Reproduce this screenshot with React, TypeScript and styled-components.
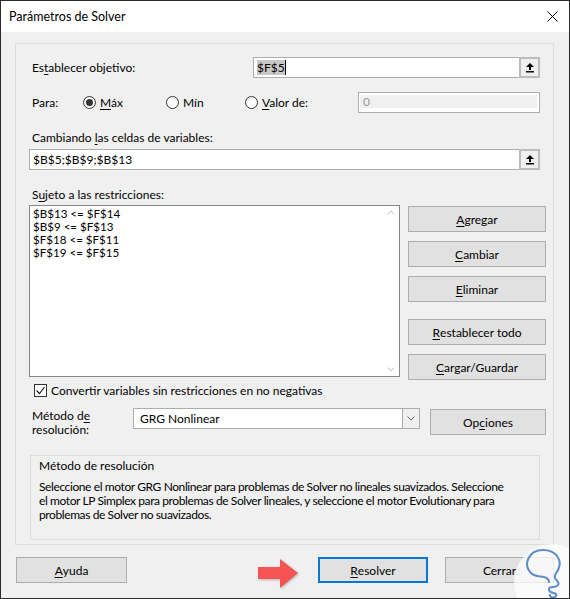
import * as React from 'react';
import styled, { createGlobalStyle } from 'styled-components';

const GlobalStyle = createGlobalStyle`
    html, body {
        margin: 0;
        padding: 0;
        background: #ffffff;
    }
    body {
        font-family: "Segoe UI", Lato, "Liberation Sans", sans-serif;
        font-size: 12px;
        color: #000000;
    }
`;

const Window = styled.div`
    position: relative;
    box-sizing: border-box;
    width: 570px;
    height: 599px;
    border: 1px solid #2b2b2b;
    background-color: #f0f0f0;
    display: flex;
    flex-direction: column;
    overflow: hidden;
`;

const TitleBar = styled.div`
    height: 31px;
    flex-shrink: 0;
    background-color: #ffffff;
    display: flex;
    align-items: center;
    justify-content: space-between;
    padding: 0 11px 0 8px;
`;

const Title = styled.span`
    font-size: 12.5px;
`;

const Body = styled.div`
    flex: 1;
    padding: 11px 15px 0 14px;
    display: flex;
    flex-direction: column;
`;

const Panel = styled.div`
    border: 1px solid #dcdcdc;
    padding: 13px 6px 4px 13px;
    display: flex;
    flex-direction: column;
`;

const ObjectiveRow = styled.div`
    display: grid;
    grid-template-columns: 224px 287px;
    align-items: center;
    height: 21px;
`;

const Label = styled.div<{ $top?: number }>`
    padding-left: 3px;
    line-height: 16px;
    margin-top: ${(p) => p.$top || 0}px;
`;

const TextField = styled.div<{ $top?: number; $width?: number }>`
    box-sizing: border-box;
    height: 21px;
    width: ${(p) => (p.$width ? `${p.$width}px` : 'auto')};
    margin-top: ${(p) => p.$top || 0}px;
    background-color: #ffffff;
    border: 1px solid #abadb3;
    display: flex;
    align-items: center;
    padding-left: 3px;
`;

const FieldText = styled.span`
    flex: 1;
    white-space: nowrap;
`;

const Selected = styled.span`
    background-color: #c8c8c8;
    border-right: 1px solid #000000;
`;

const RefButton = styled.div`
    box-sizing: border-box;
    width: 21px;
    height: 21px;
    margin: -1px -1px -1px 0;
    border: 2px solid #bcbcbc;
    background-color: #f0f0f0;
    display: flex;
    align-items: center;
    justify-content: center;
`;

const ParaRow = styled.div`
    display: grid;
    grid-template-columns: 54px 83px 79px 113px 182px;
    align-items: center;
    height: 21px;
    margin-top: 14px;
`;

const RadioItem = styled.div`
    display: flex;
    align-items: center;
    gap: 4px;
`;

const RadioCircle = styled.span<{ $checked?: boolean }>`
    box-sizing: border-box;
    width: 13px;
    height: 13px;
    border-radius: 50%;
    border: 1px solid #333333;
    background-color: #ffffff;
    display: flex;
    align-items: center;
    justify-content: center;

    &::after {
        content: '';
        display: ${(p) => (p.$checked ? 'block' : 'none')};
        width: 7px;
        height: 7px;
        border-radius: 50%;
        background-color: #333333;
    }
`;

const DisabledField = styled.div`
    box-sizing: border-box;
    height: 21px;
    border: 1px solid #abadb3;
    background-color: #ffffff;
    padding: 2px 2px 4px 1px;
    display: flex;
`;

const DisabledInner = styled.div`
    flex: 1;
    background-color: #f0f0f0;
    color: #9a9a9a;
    padding-left: 3px;
    line-height: 13px;
`;

const ConstraintArea = styled.div`
    display: grid;
    grid-template-columns: 371px 138px;
    column-gap: 8px;
    align-items: start;
    margin-top: 2px;
`;

const ListBox = styled.div`
    box-sizing: border-box;
    height: 172px;
    border: 1px solid #828790;
    background-color: #ffffff;
    display: flex;
`;

const ListItems = styled.div`
    flex: 1;
    padding: 1px 0 0 3px;
    font-size: 11.6px;
    line-height: 13px;
`;

const ScrollBar = styled.div`
    width: 17px;
    display: flex;
    flex-direction: column;
    justify-content: space-between;
    align-items: center;
    padding: 4px 0;
`;

const ButtonColumn = styled.div`
    display: flex;
    flex-direction: column;
`;

const Button = styled.div<{ $top?: number; $width?: number; $default?: boolean }>`
    box-sizing: border-box;
    flex-shrink: 0;
    height: 26px;
    width: ${(p) => (p.$width ? `${p.$width}px` : 'auto')};
    margin-top: ${(p) => p.$top || 0}px;
    background-color: #e1e1e1;
    border: ${(p) => (p.$default ? '2px solid #0078d7' : '1px solid #adadad')};
    display: flex;
    align-items: center;
    justify-content: center;
    white-space: nowrap;
`;

const CheckRow = styled.div`
    display: flex;
    align-items: center;
    gap: 4px;
    height: 16px;
    margin-top: 2px;
    padding-left: 5px;
`;

const CheckBox = styled.span`
    box-sizing: border-box;
    width: 13px;
    height: 13px;
    border: 1px solid #333333;
    background-color: #ffffff;
    display: flex;
    align-items: center;
    justify-content: center;
`;

const MethodRow = styled.div`
    display: flex;
    align-items: flex-start;
    margin-top: 10px;
`;

const MethodLabel = styled.div`
    width: 101px;
    padding: 1px 0 0 3px;
    line-height: 14px;
`;

const Select = styled.div`
    box-sizing: border-box;
    width: 287px;
    height: 21px;
    border: 1px solid #abadb3;
    background-color: #ffffff;
    display: flex;
    align-items: center;
    padding-left: 6px;
`;

const SelectArrow = styled.div`
    box-sizing: border-box;
    width: 18px;
    height: 21px;
    margin: -1px -1px -1px 0;
    border: 1px solid #abadb3;
    background-color: #f0f0f0;
    display: flex;
    align-items: center;
    justify-content: center;
`;

const OptionsButton = styled(Button)`
    width: 116px;
    margin-left: 10px;
    margin-top: 1px;
`;

const InfoBox = styled.div`
    box-sizing: border-box;
    width: 510px;
    height: 85px;
    margin: 18px 0 0 1px;
    border: 1px solid #dcdcdc;
    padding: 2px 4px 0 8px;
`;

const InfoTitle = styled.div`
    line-height: 15px;
`;

const InfoText = styled.p`
    margin: 7px 0 0;
    line-height: 14px;
    letter-spacing: -0.4px;
    white-space: nowrap;
`;

const Footer = styled.div`
    display: flex;
    justify-content: space-between;
    align-items: center;
    padding: 12px 0 0 1px;
`;

const FooterGroup = styled.div`
    display: flex;
    gap: 17px;
`;

const Arrow = styled.svg`
    position: absolute;
    left: 255px;
    top: 555px;
    filter: drop-shadow(1px 1px 1px rgba(0, 0, 0, 0.25));
`;

const LogoBadge = styled.div`
    position: absolute;
    left: 513px;
    top: 543px;
    width: 76px;
    height: 76px;
    border-radius: 50%;
    background-color: rgba(255, 255, 255, 0.72);
`;

const Mn = styled.span`
    text-decoration: underline;
    text-underline-offset: 2px;
`;

function RefIcon() {
    return (
        <svg width="10" height="11" viewBox="0 0 10 11">
            <path d="M5 1 L9 5 L6 5 L6 8 L4 8 L4 5 L1 5 Z" fill="#000" />
            <rect x="1" y="9" width="8" height="1.5" fill="#000" />
        </svg>
    );
}

function Chevron({ up }: { up?: boolean }) {
    return (
        <svg width="8" height="5" viewBox="0 0 8 5">
            <path
                d={up ? 'M0.5 4.5 L4 1 L7.5 4.5' : 'M0.5 0.5 L4 4 L7.5 0.5'}
                fill="none"
                stroke="#c2c2c2"
                strokeWidth="1"
            />
        </svg>
    );
}

const constraints = ['$B$13 <= $F$14', '$B$9 <= $F$13', '$F$18 <= $F$11', '$F$19 <= $F$15'];

export default function App() {
    return (
        <Window>
            <GlobalStyle />
            <TitleBar>
                <Title>Parámetros de Solver</Title>
                <svg width="11" height="11" viewBox="0 0 11 11">
                    <path d="M0.5 0.5 L10.5 10.5 M10.5 0.5 L0.5 10.5" stroke="#000" strokeWidth="1" />
                </svg>
            </TitleBar>
            <Body>
                <Panel>
                    <ObjectiveRow>
                        <Label>
                            Es<Mn>t</Mn>ablecer objetivo:
                        </Label>
                        <TextField>
                            <FieldText>
                                <Selected>$F$5</Selected>
                            </FieldText>
                            <RefButton>
                                <RefIcon />
                            </RefButton>
                        </TextField>
                    </ObjectiveRow>

                    <ParaRow>
                        <Label>Para:</Label>
                        <RadioItem>
                            <RadioCircle $checked />
                            <span>
                                <Mn>M</Mn>áx
                            </span>
                        </RadioItem>
                        <RadioItem>
                            <RadioCircle />
                            <span>Mín</span>
                        </RadioItem>
                        <RadioItem>
                            <RadioCircle />
                            <span>
                                <Mn>V</Mn>alor de:
                            </span>
                        </RadioItem>
                        <DisabledField>
                            <DisabledInner>0</DisabledInner>
                        </DisabledField>
                    </ParaRow>

                    <Label $top={17}>
                        Cambiando <Mn>l</Mn>as celdas de variables:
                    </Label>
                    <TextField $top={3} $width={511}>
                        <FieldText>$B$5;$B$9;$B$13</FieldText>
                        <RefButton>
                            <RefIcon />
                        </RefButton>
                    </TextField>

                    <Label $top={17}>
                        S<Mn>u</Mn>jeto a las restricciones:
                    </Label>
                    <ConstraintArea>
                        <ListBox>
                            <ListItems>
                                {constraints.map((c) => (
                                    <div key={c}>{c}</div>
                                ))}
                            </ListItems>
                            <ScrollBar>
                                <Chevron up />
                                <Chevron />
                            </ScrollBar>
                        </ListBox>
                        <ButtonColumn>
                            <Button $top={1}>
                                <Mn>A</Mn>gregar
                            </Button>
                            <Button $top={9}>
                                <Mn>C</Mn>ambiar
                            </Button>
                            <Button $top={9}>
                                <Mn>E</Mn>liminar
                            </Button>
                            <Button $top={17}>
                                <Mn>R</Mn>establecer todo
                            </Button>
                            <Button $top={9}>
                                <Mn>C</Mn>argar/Guardar
                            </Button>
                        </ButtonColumn>
                    </ConstraintArea>

                    <CheckRow>
                        <CheckBox>
                            <svg width="11" height="11" viewBox="0 0 11 11">
                                <path d="M1.5 5.5 L4.5 8.5 L9.5 2" fill="none" stroke="#222" strokeWidth="1.2" />
                            </svg>
                        </CheckBox>
                        <span>Convertir variables sin restricciones en no negativas</span>
                    </CheckRow>

                    <MethodRow>
                        <MethodLabel>
                            Método d<Mn>e</Mn>
                            <br />
                            resolución:
                        </MethodLabel>
                        <Select>
                            <FieldText>GRG Nonlinear</FieldText>
                            <SelectArrow>
                                <svg width="8" height="5" viewBox="0 0 8 5">
                                    <path d="M0.5 0.5 L4 4 L7.5 0.5" fill="none" stroke="#606060" strokeWidth="1" />
                                </svg>
                            </SelectArrow>
                        </Select>
                        <OptionsButton>
                            Op<Mn>c</Mn>iones
                        </OptionsButton>
                    </MethodRow>

                    <InfoBox>
                        <InfoTitle>Método de resolución</InfoTitle>
                        <InfoText>
                            Seleccione el motor GRG Nonlinear para problemas de Solver no lineales suavizados. Seleccione
                            <br />
                            el motor LP Simplex para problemas de Solver lineales, y seleccione el motor Evolutionary para
                            <br />
                            problemas de Solver no suavizados.
                        </InfoText>
                    </InfoBox>
                </Panel>

                <Footer>
                    <Button $width={111}>
                        <Mn>A</Mn>yuda
                    </Button>
                    <FooterGroup>
                        <Button $width={110} $default>
                            <Mn>R</Mn>esolver
                        </Button>
                        <Button $width={109}>Cerrar</Button>
                    </FooterGroup>
                </Footer>
            </Body>

            <Arrow width="46" height="36" viewBox="0 0 46 36">
                <polygon points="2,11 24,11 24,3 42,17 24,32 24,23 2,23" fill="#f65454" />
            </Arrow>
            <LogoBadge>
                <svg width="76" height="76" viewBox="0 0 76 76">
                    <path
                        d="M17 29 C9 21 14 6 29 6 C42 6 49 16 44 26 C42 30 40 31 41 34 C42 37 47 39 43 42 C40 44 34 42 35 46 C36 50 44 48 42 52 C40 55 35 53 36 51 M17 29 C21 33 26 32 30 33 C34 34 35 36 35 38"
                        fill="none"
                        stroke="#5b8bc8"
                        strokeWidth="2"
                        strokeLinecap="round"
                    />
                </svg>
            </LogoBadge>
        </Window>
    );
}
